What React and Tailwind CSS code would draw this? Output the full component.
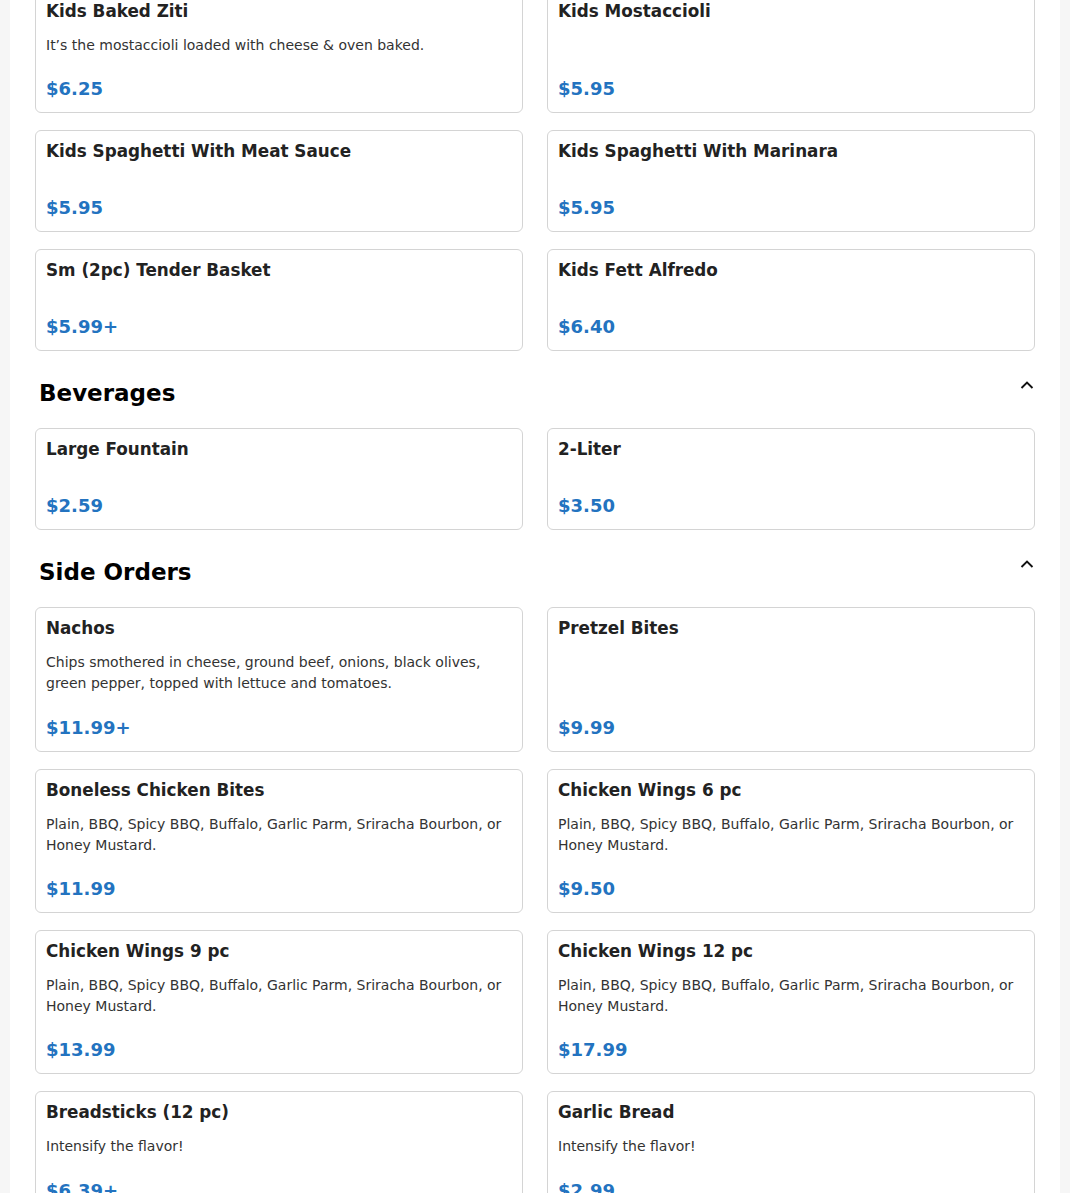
import React from "react";

const sections = [
  {
    title: null,
    items: [
      { name: "Kids Baked Ziti", desc: "It’s the mostaccioli loaded with cheese & oven baked.", price: "$6.25" },
      { name: "Kids Mostaccioli", desc: "", price: "$5.95" },
      { name: "Kids Spaghetti With Meat Sauce", desc: "", price: "$5.95" },
      { name: "Kids Spaghetti With Marinara", desc: "", price: "$5.95" },
      { name: "Sm (2pc) Tender Basket", desc: "", price: "$5.99+" },
      { name: "Kids Fett Alfredo", desc: "", price: "$6.40" }
    ]
  },
  {
    title: "Beverages",
    items: [
      { name: "Large Fountain", desc: "", price: "$2.59" },
      { name: "2-Liter", desc: "", price: "$3.50" }
    ]
  },
  {
    title: "Side Orders",
    items: [
      {
        name: "Nachos",
        desc: "Chips smothered in cheese, ground beef, onions, black olives, green pepper, topped with lettuce and tomatoes.",
        price: "$11.99+"
      },
      { name: "Pretzel Bites", desc: "", price: "$9.99" },
      {
        name: "Boneless Chicken Bites",
        desc: "Plain, BBQ, Spicy BBQ, Buffalo, Garlic Parm, Sriracha Bourbon, or Honey Mustard.",
        price: "$11.99"
      },
      {
        name: "Chicken Wings 6 pc",
        desc: "Plain, BBQ, Spicy BBQ, Buffalo, Garlic Parm, Sriracha Bourbon, or Honey Mustard.",
        price: "$9.50"
      },
      {
        name: "Chicken Wings 9 pc",
        desc: "Plain, BBQ, Spicy BBQ, Buffalo, Garlic Parm, Sriracha Bourbon, or Honey Mustard.",
        price: "$13.99"
      },
      {
        name: "Chicken Wings 12 pc",
        desc: "Plain, BBQ, Spicy BBQ, Buffalo, Garlic Parm, Sriracha Bourbon, or Honey Mustard.",
        price: "$17.99"
      },
      { name: "Breadsticks (12 pc)", desc: "Intensify the flavor!", price: "$6.39+" },
      { name: "Garlic Bread", desc: "Intensify the flavor!", price: "$2.99" }
    ]
  }
];

function ChevronUp() {
  return (
    <svg width="14" height="10" viewBox="0 0 14 10" fill="none" className="-mt-4">
      <path d="M1.5 8L7 2.5 12.5 8" stroke="#111" strokeWidth="1.9" />
    </svg>
  );
}

function MenuCard({ name, desc, price }) {
  return (
    <div className="flex flex-col rounded-md border border-[#d4d4d4] bg-white px-2.5 pt-[9px] pb-[11px]">
      <h3 className="text-[16.8px] leading-[22px] font-bold text-[#222]">{name}</h3>
      <p className={`mt-[13px] text-sm leading-[21px] text-[#333] ${desc ? "mb-[21.33px]" : "mb-[21px]"}`}>{desc}</p>
      <p className="mt-auto text-lg leading-6 font-bold text-[#2373c0]">{price}</p>
    </div>
  );
}

export default function App() {
  return (
    <div className="h-screen overflow-hidden bg-[#f6f6f6]" style={{ fontFamily: '"DejaVu Sans", sans-serif' }}>
      <div className="mx-auto w-[1050px] bg-white px-[25px] pb-10 -mt-[10px]">
        {sections.map((section, i) => (
          <div key={i}>
            {section.title && (
              <div className="flex items-center justify-between pl-1 pr-[1px] pt-[28px] pb-[21px]">
                <h2 className="text-[23px] leading-7 font-bold text-black">{section.title}</h2>
                <ChevronUp />
              </div>
            )}
            <div className="grid grid-cols-2 gap-x-[24px] gap-y-[17px]">
              {section.items.map((item) => (
                <MenuCard key={item.name} {...item} />
              ))}
            </div>
          </div>
        ))}
      </div>
    </div>
  );
}
